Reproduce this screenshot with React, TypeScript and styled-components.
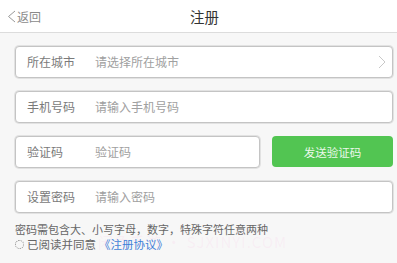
import React from "react";
import styled, { createGlobalStyle } from "styled-components";

const GlobalStyle = createGlobalStyle`
  html, body {
    margin: 0;
    padding: 0;
    background: #f7f7f7;
    font-family: "Noto Sans CJK SC", "Liberation Sans", sans-serif;
  }
`;

const Page = styled.div`
  position: relative;
  width: 397px;
  height: 263px;
  overflow: hidden;
  background: #f7f7f7;
`;

const Header = styled.div`
  height: 32px;
  background: #fff;
  border-bottom: 1px solid #dcdcdc;
  display: flex;
  align-items: center;
  justify-content: center;
  position: relative;
`;

const Back = styled.div`
  position: absolute;
  left: 7px;
  top: 0;
  height: 32px;
  display: flex;
  align-items: center;
  gap: 1px;
  font-size: 12px;
  color: #8a8a8a;
`;

const Title = styled.div`
  font-size: 14.5px;
  color: #333;
  margin-left: 12px;
`;

const Form = styled.div`
  display: flex;
  flex-direction: column;
  gap: 13px;
  padding: 13px 4px 0 15px;
`;

const Row = styled.div`
  display: flex;
  gap: 12px;
`;

const Field = styled.div<{ $narrow?: boolean }>`
  box-sizing: border-box;
  height: 32px;
  flex: 1;
  display: flex;
  align-items: center;
  background: #fff;
  border: 1px solid #c4c4c4;
  border-radius: 4px;
  box-shadow: 0 0 0 1px #e2e2e2;
  padding-left: 11px;
  padding-right: 6px;
  font-size: 12px;
  line-height: 16px;
  ${(p) => (p.$narrow ? "flex: 0 0 245px;" : "")}
`;

const Label = styled.span`
  width: 68px;
  color: #7a7a7a;
`;

const Placeholder = styled.span`
  flex: 1;
  color: #a0a0a0;
`;

const SendButton = styled.div`
  flex: 1;
  height: 31px;
  border-radius: 4px;
  background: #52c552;
  color: #eaf8ea;
  font-size: 11.5px;
  display: flex;
  align-items: center;
  justify-content: center;
`;

const Hint = styled.div`
  margin-top: 9px;
  padding-left: 15px;
  font-size: 11px;
  line-height: 14px;
  color: #666;
`;

const Agree = styled.div`
  margin-top: 1px;
  padding-left: 15px;
  display: flex;
  align-items: center;
  gap: 3px;
  font-size: 11.5px;
  line-height: 14px;
  color: #666;
`;

const Radio = styled.span`
  width: 7px;
  height: 7px;
  border-radius: 50%;
  border: 1px dotted #888;
`;

const Link = styled.span`
  color: #3b7fd8;
`;

const Watermark = styled.div`
  position: absolute;
  left: 98px;
  top: 233px;
  font-size: 15px;
  line-height: 18px;
  letter-spacing: 1px;
  color: rgba(250, 170, 215, 0.12);
  pointer-events: none;
`;

export default function App() {
  return (
    <Page>
      <GlobalStyle />
      <Header>
        <Back>
          <svg width="9" height="13" viewBox="0 0 9 13">
            <path d="M8 1 L1.5 6.5 L8 12" fill="none" stroke="#999" strokeWidth="1" />
          </svg>
          返回
        </Back>
        <Title>注册</Title>
      </Header>
      <Form>
        <Row>
          <Field>
            <Label>所在城市</Label>
            <Placeholder>请选择所在城市</Placeholder>
            <svg width="8" height="14" viewBox="0 0 8 14">
              <path d="M1 1 L7 7 L1 13" fill="none" stroke="#c8c8c8" strokeWidth="1" />
            </svg>
          </Field>
        </Row>
        <Row>
          <Field>
            <Label>手机号码</Label>
            <Placeholder>请输入手机号码</Placeholder>
          </Field>
        </Row>
        <Row>
          <Field $narrow>
            <Label>验证码</Label>
            <Placeholder>验证码</Placeholder>
          </Field>
          <SendButton>发送验证码</SendButton>
        </Row>
        <Row>
          <Field>
            <Label>设置密码</Label>
            <Placeholder>请输入密码</Placeholder>
          </Field>
        </Row>
      </Form>
      <Hint>密码需包含大、小写字母，数字，特殊字符任意两种</Hint>
      <Agree>
        <Radio />
        已阅读并同意<Link>《注册协议》</Link>
      </Agree>
      <Watermark>闲鱼手游 • SJXINYI.COM</Watermark>
    </Page>
  );
}
